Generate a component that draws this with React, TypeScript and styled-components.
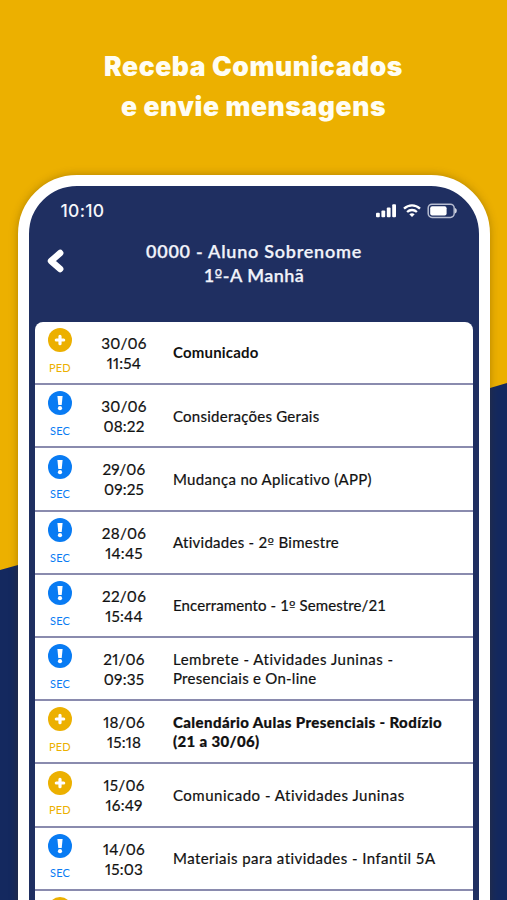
import React from "react";
import styled, { createGlobalStyle } from "styled-components";

const NAVY = "#1f2f61";
const YELLOW = "#ecb000";
const BLUE = "#087bf3";

const GlobalStyle = createGlobalStyle`
  *, *::before, *::after { box-sizing: border-box; }
  body { margin: 0; font-family: Lato, "Open Sans", sans-serif; }
`;

const Page = styled.main`
  position: relative;
  width: 507px;
  height: 900px;
  overflow: hidden;
  background: ${YELLOW};
  &::before {
    content: "";
    position: absolute;
    inset: 0;
    background: #14295f;
    clip-path: polygon(0 570px, 18px 565px, 490px 388px, 507px 383px, 507px 900px, 0 900px);
  }
`;

const Headline = styled.h1`
  position: relative;
  height: 175px;
  margin: 0;
  padding-top: 46px;
  color: #fffdf3;
  font-family: Inter, sans-serif;
  font-size: 26.5px;
  font-weight: 900;
  line-height: 40px;
  text-align: center;
`;

const Line = styled.span<{ $spacing: number }>`
  display: block;
  letter-spacing: ${(p) => p.$spacing}px;
`;

const Ordinal = styled.span`
  font-family: "DejaVu Sans", sans-serif;
  font-size: 0.92em;
  font-weight: 400;
  line-height: 1;
`;

const Phone = styled.section`
  position: relative;
  width: 472px;
  height: 790px;
  margin-left: 18px;
  padding: 0 6px;
  border: 11px solid #fff;
  border-radius: 59px;
  background: ${NAVY};
  box-shadow: 0 0 9px rgba(80, 55, 0, 0.38);
`;

const StatusBar = styled.div`
  display: flex;
  align-items: center;
  justify-content: space-between;
  height: 49px;
  padding: 0 16px 0 25.5px;
`;

const Clock = styled.time`
  color: #f5f6fa;
  font: 500 17.5px/20px Inter, sans-serif;
  letter-spacing: 0.3px;
`;

const StatusIcons = styled.svg`
  display: block;
  width: 82px;
  height: 16px;
`;

const Header = styled.header`
  display: grid;
  grid-template-columns: 46px 1fr 46px;
  height: 87px;
  padding-top: 4px;
`;

const Back = styled.button`
  width: 20px;
  height: 26px;
  margin: 9px 0 0 10px;
  padding: 0;
  border: 0;
  background: none;
  svg { display: block; }
`;

const Student = styled.h2`
  margin: 0;
  color: #f1f3fa;
  font-size: 18px;
  font-weight: 600;
  line-height: 24px;
  text-align: center;
  white-space: nowrap;
  -webkit-text-stroke: 0.25px currentColor;
`;

const List = styled.ul`
  margin: 0;
  padding: 0;
  list-style: none;
  overflow: hidden;
  border-radius: 8px 8px 0 0;
  background: #fff;
`;

const Row = styled.li`
  display: grid;
  grid-template-columns: 50px 78px 1fr;
  height: 63.2px;
  border-bottom: 2px solid #8a8bae;
`;

const Kind = styled.div<{ $color: string }>`
  display: flex;
  flex-direction: column;
  align-items: center;
  padding-top: 6.3px;
  color: ${(p) => p.$color};
  font-size: 11px;
  line-height: 14px;
  letter-spacing: 0.15px;
  svg { display: block; margin-bottom: 8.7px; }
`;

const Moment = styled.div`
  display: flex;
  flex-direction: column;
  align-items: center;
  padding-top: 11px;
  color: #111;
  font-size: 15.3px;
  line-height: 20px;
  letter-spacing: 0.2px;
  font-variant-numeric: proportional-nums;
  -webkit-text-stroke: 0.2px currentColor;
`;

const Subject = styled.div<{ $weight: number }>`
  display: flex;
  flex-direction: column;
  justify-content: center;
  padding: 1px 0 0 10px;
  color: #111;
  font-size: 15px;
  font-weight: ${(p) => p.$weight};
  line-height: 19.5px;
  white-space: nowrap;
  -webkit-text-stroke: ${(p) => (p.$weight === 700 ? 0 : 0.2)}px currentColor;
`;

type Entry = {
  kind: "PED" | "SEC";
  day: string;
  hour: string;
  lines: [string, number][];
  weight?: number;
};

const entries: Entry[] = [
  { kind: "PED", day: "30/06", hour: "11:54", lines: [["Comunicado", 0.2]], weight: 700 },
  { kind: "SEC", day: "30/06", hour: "08:22", lines: [["Considerações Gerais", 0.25]] },
  { kind: "SEC", day: "29/06", hour: "09:25", lines: [["Mudança no Aplicativo (APP)", 0.32]] },
  { kind: "SEC", day: "28/06", hour: "14:45", lines: [["Atividades - 2º Bimestre", 0.28]] },
  { kind: "SEC", day: "22/06", hour: "15:44", lines: [["Encerramento - 1º Semestre/21", 0.1]] },
  { kind: "SEC", day: "21/06", hour: "09:35", lines: [["Lembrete - Atividades Juninas -", 0.5], ["Presenciais e On-line", 0.26]] },
  { kind: "PED", day: "18/06", hour: "15:18", lines: [["Calendário Aulas Presenciais - Rodízio", 0.4], ["(21 a 30/06)", 0.35]], weight: 900 },
  { kind: "PED", day: "15/06", hour: "16:49", lines: [["Comunicado - Atividades Juninas", 0.5]] },
  { kind: "SEC", day: "14/06", hour: "15:03", lines: [["Materiais para atividades - Infantil 5A", 0.44]] },
];

function withOrdinals(text: string) {
  return text.split("º").map((part, i) => (
    <React.Fragment key={i}>
      {i > 0 && <Ordinal>º</Ordinal>}
      {part}
    </React.Fragment>
  ));
}

function KindIcon({ kind }: { kind: Entry["kind"] }) {
  return (
    <svg width="24" height="24" viewBox="0 0 24 24">
      <circle cx="12" cy="12" r="12" fill="currentColor" />
      {kind === "PED" ? (
        <path d="M12 8.3v7.4M8.3 12h7.4" stroke="#fff" strokeWidth="3.2" strokeLinecap="round" />
      ) : (
        <>
          <path d="M9.4 5h5.2l-.9 9h-3.4z" fill="#fff" />
          <circle cx="12" cy="17.2" r="2.1" fill="#fff" />
        </>
      )}
    </svg>
  );
}

export default function App() {
  return (
    <>
      <GlobalStyle />
      <Page>
        <Headline>
          <Line $spacing={0.55}>Receba Comunicados</Line>
          <Line $spacing={0.55}>e envie mensagens</Line>
        </Headline>
        <Phone>
          <StatusBar>
            <Clock>10:10</Clock>
            <StatusIcons viewBox="0 0 82 16" fill="#fff">
              <rect x="1" y="9.8" width="3.8" height="4.4" rx="1" />
              <rect x="6.4" y="7.4" width="3.8" height="6.8" rx="1" />
              <rect x="11.8" y="4.4" width="3.8" height="9.8" rx="1" />
              <rect x="17.2" y="1.2" width="3.8" height="13" rx="1" />
              <g fill="none" stroke="#fff" strokeWidth="2.3">
                <path d="M29 5.6c4.6-4.4 11.4-4.4 16 0" />
                <path d="M32.1 9c2.8-2.7 7-2.7 9.8 0" />
              </g>
              <path d="M34.3 11.3c1.7-1.4 3.7-1.4 5.4 0L37 14.1z" />
              <rect x="53.2" y="1.2" width="26" height="13.2" rx="3.8" fill="none" stroke="#b6bcd0" strokeWidth="1.5" />
              <rect x="55.2" y="3.2" width="16.4" height="9.2" rx="2" />
              <path d="M80 5.1c2.4.7 2.4 4.7 0 5.4z" fill="#d0d4e1" />
            </StatusIcons>
          </StatusBar>
          <Header>
            <Back aria-label="Voltar">
              <svg width="20" height="26" viewBox="0 0 20 26">
                <path d="M15.2 5 6 13l9.2 8" fill="none" stroke="#fff" strokeWidth="6.4" strokeLinecap="round" strokeLinejoin="round" />
              </svg>
            </Back>
            <Student>
              <Line $spacing={0.75}>{withOrdinals("0000 - Aluno Sobrenome")}</Line>
              <Line $spacing={0.45}>{withOrdinals("1º-A Manhã")}</Line>
            </Student>
          </Header>
          <List>
            {entries.map((e) => (
              <Row key={e.day + e.hour}>
                <Kind $color={e.kind === "PED" ? YELLOW : BLUE}>
                  <KindIcon kind={e.kind} />
                  {e.kind}
                </Kind>
                <Moment>
                  <span>{e.day}</span>
                  <span>{e.hour}</span>
                </Moment>
                <Subject $weight={e.weight ?? 400}>
                  {e.lines.map(([text, spacing]) => (
                    <Line key={text} $spacing={spacing}>{withOrdinals(text)}</Line>
                  ))}
                </Subject>
              </Row>
            ))}
            <Row>
              <Kind $color={YELLOW}>
                <KindIcon kind="PED" />
              </Kind>
            </Row>
          </List>
        </Phone>
      </Page>
    </>
  );
}
